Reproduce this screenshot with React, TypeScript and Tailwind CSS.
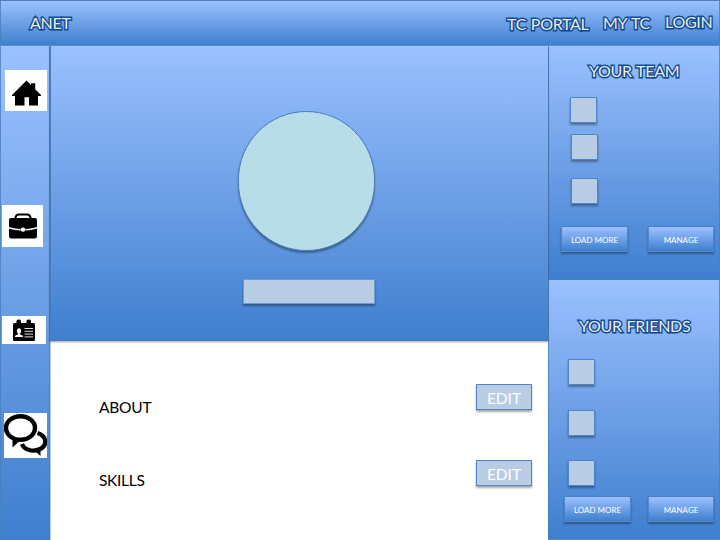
import type { ReactNode } from "react";
import clsx from "clsx";

const BLUE = "bg-linear-to-b from-[#9bc1ff] to-[#3e7fce]";
const EDGE = "border border-[#4a7ebb]/80";
const LIFT = "shadow-[0_2px_2px_rgba(0,0,0,0.35)]";
const OUTLINED =
  "block whitespace-nowrap text-[16px] leading-none tracking-[-0.3px] [word-spacing:1px] text-[#eeece1] [-webkit-text-stroke:2.8px_#0f4c9c] [paint-order:stroke_fill] [text-shadow:0.5px_1px_1px_rgba(15,60,120,0.6)]";

function Heading({ className, children }: { className?: string; children: ReactNode }) {
  return <span className={clsx(OUTLINED, className)}>{children}</span>;
}

function Tile({ className }: { className?: string }) {
  return <div className={clsx("h-[26px] w-[27px] shrink-0 border border-[#4f86c8] bg-[#b8cce4]", LIFT, className)} />;
}

function PanelButton({ className, children }: { className?: string; children: ReactNode }) {
  return (
    <button
      className={clsx(
        "flex h-[26px] shrink-0 items-center justify-center whitespace-nowrap pt-[2px] text-[8px] leading-none text-white",
        BLUE,
        EDGE,
        LIFT,
        className,
      )}
    >
      {children}
    </button>
  );
}

function EditButton() {
  return (
    <button
      className={clsx(
        "flex h-[26px] w-[56px] items-center justify-center border border-[#4f86c8] bg-[#b8cce4] pt-[4px] text-[15.5px] leading-none text-white",
        LIFT,
      )}
    >
      EDIT
    </button>
  );
}

function HomeIcon() {
  return (
    <svg className="block h-[41px] w-[42px] bg-white" viewBox="0 0 42 41">
      <path d="M21.5 10.5 L26 15 V13.2 H30.2 V19.2 L36 25 V26 H33 V35.5 H24 V27.2 H19.5 V35.5 H10 V26 H7 V25 Z" fill="#000" />
    </svg>
  );
}

function BriefcaseIcon() {
  return (
    <svg className="block h-[42px] w-[41px] bg-white" viewBox="0 0 41 42">
      <path d="M13.5 14 V12.5 Q14 9.5 17 9.5 H25 Q28 9.5 28.5 12.5 V14" fill="none" stroke="#000" strokeWidth="2" />
      <path d="M9 13 H33 Q35 13 35 15 V22 Q29 23.8 23.3 24 Q23 22.5 21 22.5 Q19 22.5 18.7 24 Q13 23.8 7 22 V15 Q7 13 9 13 Z" fill="#000" />
      <path d="M7 23.4 Q13 25.3 18.7 25.5 L18.7 24 H23.3 V25.5 Q29 25.3 35 23.4 V31 Q35 33.5 32.5 33.5 H9.5 Q7 33.5 7 31 Z" fill="#000" />
      <ellipse cx="21" cy="24.8" rx="2.2" ry="2" fill="#fff" />
    </svg>
  );
}

function ContactIcon() {
  return (
    <svg className="block h-[28px] w-[44px] bg-white" viewBox="0 0 44 28">
      <rect x="11" y="7" width="22" height="18" rx="1.5" fill="#000" />
      <rect x="14.5" y="3.5" width="4.5" height="6" rx="1.8" fill="#000" />
      <rect x="24.5" y="3.5" width="4.5" height="6" rx="1.8" fill="#000" />
      <ellipse cx="17" cy="15" rx="2.1" ry="2.8" fill="#fff" />
      <path d="M16 16.5 H18 V18.5 L21 19.8 V21 H13 V19.8 L16 18.5 Z" fill="#fff" />
      <path d="M22.5 12.5 H31 M22.5 15.3 H31 M22.5 18.1 H31 M22.5 20.9 H31" stroke="#ddd" strokeWidth="1" />
    </svg>
  );
}

function ChatIcon() {
  return (
    <svg className="block h-[45px] w-[43px] bg-white" viewBox="0 0 43 45">
      <ellipse cx="16.5" cy="15" rx="14.5" ry="11.8" fill="none" stroke="#000" strokeWidth="4.4" />
      <path d="M8.5 25 V34.5 L15.5 28 Z" fill="#000" />
      <path d="M33.5 20 C43 23 43.5 32.5 36 36 C29 39.5 20 37 18 31" fill="none" stroke="#000" strokeWidth="4.2" />
      <path d="M31.5 38.5 L36.5 43 V36 Z" fill="#000" />
    </svg>
  );
}

export default function App() {
  return (
    <div className="flex h-[540px] w-[720px] flex-col overflow-hidden bg-white font-[Lato,sans-serif]">
      <header className={clsx("flex h-[46px] shrink-0 items-start pl-[29px]", BLUE, EDGE)}>
        <Heading className="mt-[14px] w-[477px]">ANET</Heading>
        <Heading className="mt-[15px] w-[96px]">TC PORTAL</Heading>
        <Heading className="mt-[14px] w-[62px]">MY TC</Heading>
        <Heading className="mt-[13px]">LOGIN</Heading>
      </header>

      <div className="flex min-h-0 flex-1">
        <nav className={clsx("flex w-[50px] shrink-0 flex-col items-start border-x border-[#4a7ebb]/80", BLUE)}>
          <div className="mt-[24px] ml-[4px]"><HomeIcon /></div>
          <div className="mt-[94px] ml-[1px]"><BriefcaseIcon /></div>
          <div className="mt-[69px] ml-[1px]"><ContactIcon /></div>
          <div className="mt-[69px] ml-[3px]"><ChatIcon /></div>
        </nav>

        <main className="flex w-[498px] shrink-0 flex-col">
          <section className={clsx("z-10 flex h-[295px] shrink-0 flex-col border-b border-l border-[#4a7ebb] shadow-[0_1px_2px_rgba(0,0,0,0.4)]", BLUE)}>
            <div className={clsx("mt-[65px] ml-[187px] h-[140px] w-[137px] rounded-full border border-[#4a7ebb] bg-[#b7dee8]", LIFT)} />
            <div className={clsx("mt-[28px] ml-[192px] h-[25px] w-[132px] border border-[#6f9bd0] bg-[#b8cce4]", LIFT)} />
          </section>
          <section className="flex flex-1 flex-col border-l border-[#b9cbe4] pt-[43px] pr-[16px] pl-[48px] text-[15.5px] leading-none text-black">
            <div className="flex h-[76px] items-start justify-between">
              <span className="mt-[16px] tracking-[-0.2px]">ABOUT</span>
              <EditButton />
            </div>
            <div className="flex items-start justify-between">
              <span className="mt-[13px] tracking-[-0.3px]">SKILLS</span>
              <EditButton />
            </div>
          </section>
        </main>

        <aside className="flex w-[172px] shrink-0 flex-col">
          <section className={clsx("flex h-[233px] shrink-0 flex-col border-x border-[#4a7ebb]/80", BLUE)}>
            <Heading className="mt-[17px] ml-[40px]">YOUR TEAM</Heading>
            <Tile className="mt-[18px] ml-[21px]" />
            <Tile className="mt-[11px] ml-[22px]" />
            <Tile className="mt-[18px] ml-[22px]" />
            <div className="mt-[22px] ml-[12px] flex gap-[20px]">
              <PanelButton className="w-[67px]">LOAD MORE</PanelButton>
              <PanelButton className="w-[66px]">MANAGE</PanelButton>
            </div>
          </section>
          <section className={clsx("flex flex-1 flex-col", BLUE, EDGE)}>
            <Heading className="mt-[38px] ml-[30px]">YOUR FRIENDS</Heading>
            <Tile className="mt-[25px] ml-[19px]" />
            <Tile className="mt-[25px] ml-[19px]" />
            <Tile className="mt-[24px] ml-[19px]" />
            <div className="mt-[10px] ml-[15px] flex gap-[17px]">
              <PanelButton className="w-[67px]">LOAD MORE</PanelButton>
              <PanelButton className="w-[66px]">MANAGE</PanelButton>
            </div>
          </section>
        </aside>
      </div>
    </div>
  );
}
